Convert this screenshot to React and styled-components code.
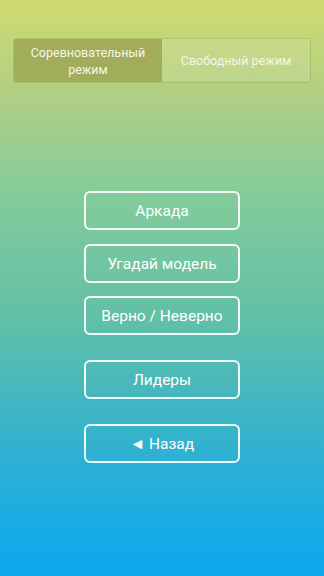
import React, { useState } from 'react';
import styled, { createGlobalStyle } from 'styled-components';

const GlobalStyle = createGlobalStyle`
  html, body {
    margin: 0;
    padding: 0;
    height: 100%;
  }
  #root {
    height: 100%;
  }
`;

const Screen = styled.div`
  height: 576px;
  background: linear-gradient(180deg, #cfdb71 0%, #afcf84 17%, #85cc9a 33%, #62c0a6 55%, #2ab0d6 81%, #0ba8ef 100%);
  font-family: Roboto, "Noto Sans", sans-serif;
  color: #fff;
  display: flex;
  flex-direction: column;
  align-items: center;
  padding-top: 38px;
  box-sizing: border-box;
`;

const Toggle = styled.div`
  width: 298px;
  height: 45px;
  display: flex;
  border: 1px solid rgba(150, 170, 80, 0.45);
  border-radius: 3px;
  overflow: hidden;
  box-sizing: border-box;
`;

const ToggleItem = styled.button`
  flex: 1 1 0;
  min-width: 0;
  border: none;
  background: ${p => (p.$active ? '#a1ad5b' : 'rgba(255, 255, 255, 0.1)')};
  color: #f4f6e6;
  font-family: inherit;
  font-size: 12.5px;
  line-height: 17px;
  padding: 0 4px;
  cursor: pointer;
`;

const Menu = styled.div`
  display: flex;
  flex-direction: column;
  align-items: center;
  margin-top: 108px;
`;

const MenuButton = styled.button`
  width: 156px;
  height: 39px;
  border: 2px solid rgba(255, 255, 255, 0.92);
  border-radius: 6px;
  background: transparent;
  color: #fff;
  font-family: inherit;
  font-size: 15.5px;
  margin-top: ${p => p.$gap || 0}px;
  cursor: pointer;
`;

export default function App() {
  const [mode, setMode] = useState(0);
  return (
    <>
      <GlobalStyle />
      <Screen>
        <Toggle>
          <ToggleItem $active={mode === 0} onClick={() => setMode(0)}>
            Соревновательный<br />режим
          </ToggleItem>
          <ToggleItem $active={mode === 1} onClick={() => setMode(1)}>
            Свободный режим
          </ToggleItem>
        </Toggle>
        <Menu>
          <MenuButton>Аркада</MenuButton>
          <MenuButton $gap={14}>Угадай модель</MenuButton>
          <MenuButton $gap={13}>Верно / Неверно</MenuButton>
          <MenuButton $gap={25}>Лидеры</MenuButton>
          <MenuButton $gap={25}>◄ Назад</MenuButton>
        </Menu>
      </Screen>
    </>
  );
}
